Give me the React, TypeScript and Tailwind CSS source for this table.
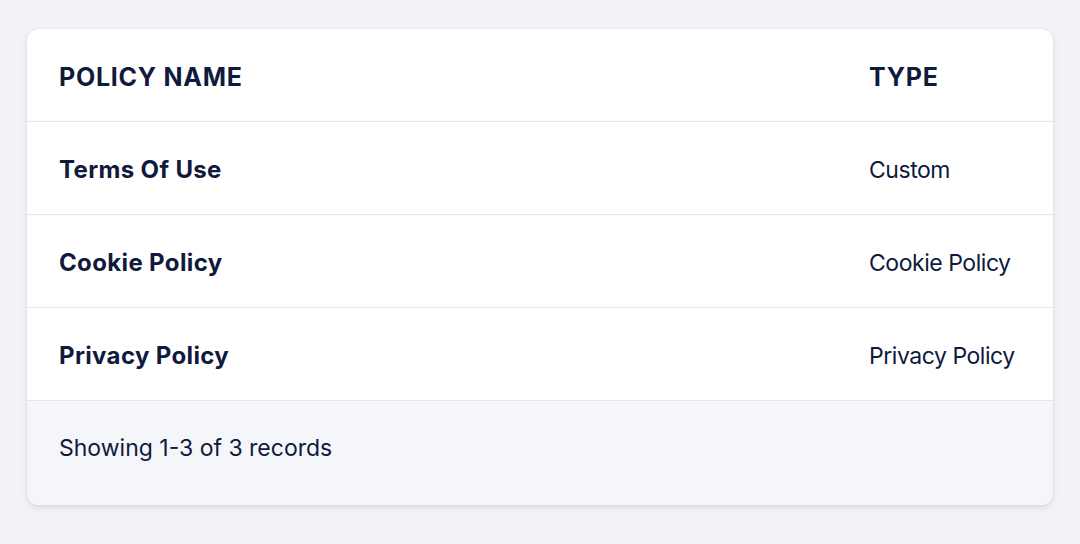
const rows = [
  { name: 'Terms Of Use', type: 'Custom' },
  { name: 'Cookie Policy', type: 'Cookie Policy' },
  { name: 'Privacy Policy', type: 'Privacy Policy' },
];

export default function App() {
  return (
    <div className="min-h-[544px] w-full bg-[#f3f3f7] pt-[29px] px-[27px] font-['Inter',sans-serif] text-[#0f1a3c]">
      <div className="overflow-hidden rounded-xl bg-white shadow-[0_3px_6px_rgba(20,20,50,0.10),0_0_0_1px_rgba(20,20,50,0.03)]">
        <div className="flex h-[93px] items-center border-b border-[#e4e5ea] px-8 pt-[6px] text-[25px] font-bold tracking-[0.03em]">
          <div className="flex-1">POLICY NAME</div>
          <div className="w-[152px]">TYPE</div>
        </div>
        {rows.map(r => (
          <div key={r.name} className="flex h-[93px] items-center border-b border-[#e4e5ea] px-8 pt-1 text-[23px]">
            <div className="flex-1 text-[24px] font-bold tracking-[0.015em]">{r.name}</div>
            <div className="w-[152px] whitespace-nowrap tracking-[-0.02em]">{r.type}</div>
          </div>
        ))}
        <div className="flex h-[104px] items-center bg-[#f5f6fa] px-8 pb-[10px] text-[23px]">
          Showing 1-3 of 3 records
        </div>
      </div>
    </div>
  );
}
